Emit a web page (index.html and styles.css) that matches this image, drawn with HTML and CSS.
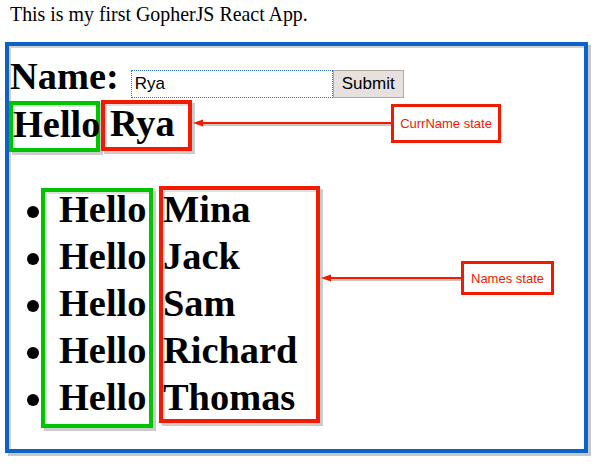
FILE: index.html
```html
<!DOCTYPE html>
<html>
<head>
<meta charset="utf-8">
<link rel="stylesheet" href="styles.css">
</head>
<body>
<p class="intro">This is my first GopherJS React App.</p>
<div class="frame">
  <div class="name-row">
    <span class="label">Name:</span>
    <input class="name-input" type="text" value="Rya">
    <button class="submit">Submit</button>
  </div>
  <div class="greet">
    <div class="box-green greet-hello">Hello</div>
    <div class="box-red greet-name">Rya</div>
  </div>
  <div class="list">
    <div class="bullets">
      <div class="row"><span class="dot"></span></div>
      <div class="row"><span class="dot"></span></div>
      <div class="row"><span class="dot"></span></div>
      <div class="row"><span class="dot"></span></div>
      <div class="row"><span class="dot"></span></div>
    </div>
    <div class="box-green col-hello">
      <div class="rows">
        <div class="row">Hello</div>
        <div class="row">Hello</div>
        <div class="row">Hello</div>
        <div class="row">Hello</div>
        <div class="row">Hello</div>
      </div>
    </div>
    <div class="box-red col-names">
      <div class="rows">
        <div class="row">Mina</div>
        <div class="row">Jack</div>
        <div class="row">Sam</div>
        <div class="row">Richard</div>
        <div class="row">Thomas</div>
      </div>
    </div>
  </div>

  <svg class="arrow arrow-curr" width="200" height="12" viewBox="0 0 200 12">
    <line x1="10" y1="7" x2="198" y2="7" stroke="#c8c4c0" stroke-width="2"/>
    <line x1="8" y1="5" x2="198" y2="5" stroke="#f21a00" stroke-width="2"/>
    <polygon points="0,5 10,1.5 10,8.5" fill="#f21a00"/>
  </svg>
  <div class="callout callout-curr">CurrName state</div>

  <svg class="arrow arrow-names" width="142" height="12" viewBox="0 0 142 12">
    <line x1="10" y1="7" x2="140" y2="7" stroke="#c8c4c0" stroke-width="2"/>
    <line x1="8" y1="5" x2="140" y2="5" stroke="#f21a00" stroke-width="2"/>
    <polygon points="0,5 10,1.5 10,8.5" fill="#f21a00"/>
  </svg>
  <div class="callout callout-names">Names state</div>
</div>
</body>
</html>
```

FILE: styles.css
```css
html, body {
  margin: 0;
  padding: 0;
  background: #ffffff;
}

body {
  font-family: "Liberation Serif", "Times New Roman", serif;
  color: #000;
  width: 611px;
  height: 468px;
  overflow: hidden;
}

.intro {
  margin: 3px 0 0 10px;
  font-size: 19.9px;
  line-height: 22px;
}

.frame {
  position: relative;
  box-sizing: border-box;
  width: 583px;
  height: 411px;
  margin: 17px 0 0 5px;
  padding: 8px 0 0 0;
  border: 4px solid #0b63c5;
  box-shadow: 3px 3px 0 rgba(0, 0, 0, 0.22), inset 2px 2px 0 rgba(0, 0, 0, 0.18);
}

.name-row {
  display: flex;
  align-items: baseline;
  height: 44px;
  line-height: 44px;
  margin-bottom: 2px;
}

.label {
  font-weight: bold;
  font-size: 38.4px;
  padding-left: 1px;
  margin-right: 12px;
}

.name-input {
  box-sizing: border-box;
  width: 202px;
  height: 28px;
  margin: 0;
  padding: 0 3px;
  border: 1px dotted #2f74cc;
  font-family: "Liberation Sans", Arial, sans-serif;
  font-size: 17px;
  color: #000;
  background: #fff;
  outline: none;
}

.submit {
  box-sizing: border-box;
  width: 71px;
  height: 28px;
  margin: 0;
  padding: 0;
  border: 1px solid #b4aca2;
  background: #e6e1dc;
  font-family: "Liberation Sans", Arial, sans-serif;
  font-size: 17px;
  color: #000;
}

.box-green {
  box-sizing: border-box;
  border: 4px solid #00c400;
  box-shadow: 3px 3px 0 rgba(0, 0, 0, 0.2), inset 2px 2px 0 rgba(0, 0, 0, 0.12);
}

.box-red {
  box-sizing: border-box;
  border: 4px solid #f21a00;
  box-shadow: 3px 3px 0 rgba(0, 0, 0, 0.2), inset 2px 2px 0 rgba(0, 0, 0, 0.12);
}

.greet {
  display: flex;
  align-items: flex-start;
  font-weight: bold;
  font-size: 38.4px;
  white-space: nowrap;
}

.greet-hello {
  width: 91px;
  height: 51px;
  margin-top: 1px;
  line-height: 38px;
  padding: 0 0 5px 0;
}

.greet-name {
  width: 91px;
  height: 51px;
  margin-left: 1px;
  line-height: 38px;
  padding: 0 0 5px 5px;
}

.list {
  display: flex;
  align-items: flex-start;
  font-weight: bold;
  font-size: 38.4px;
  white-space: nowrap;
}

.row {
  height: 47px;
  line-height: 47px;
}

.bullets {
  width: 16px;
  margin: 34px 0 0 16px;
}

.bullets .row {
  overflow: hidden;
}

.dot {
  display: block;
  width: 12px;
  height: 12px;
  margin: 20px 0 0 2px;
  border-radius: 50%;
  background: #000;
}

.col-hello {
  width: 112px;
  height: 240px;
  margin-top: 36px;
  padding-left: 14px;
}

.col-hello .rows {
  margin-top: -6px;
}

.col-names {
  width: 161px;
  height: 237px;
  margin: 34px 0 0 6px;
}

.col-names .rows {
  margin-top: -4px;
}

.callout {
  position: absolute;
  box-sizing: border-box;
  border: 3px solid #f21a00;
  color: #f21a00;
  font-family: "Liberation Sans", Arial, sans-serif;
  font-size: 13px;
  font-weight: normal;
  display: flex;
  align-items: center;
  justify-content: center;
  white-space: nowrap;
  background: #fff;
}

.callout-curr {
  left: 382px;
  top: 58px;
  width: 110px;
  height: 39px;
}

.callout-names {
  left: 452px;
  top: 215px;
  width: 93px;
  height: 34px;
}

.arrow {
  position: absolute;
  display: block;
}

.arrow-curr {
  left: 184px;
  top: 72px;
}

.arrow-names {
  left: 312px;
  top: 227px;
}
```
